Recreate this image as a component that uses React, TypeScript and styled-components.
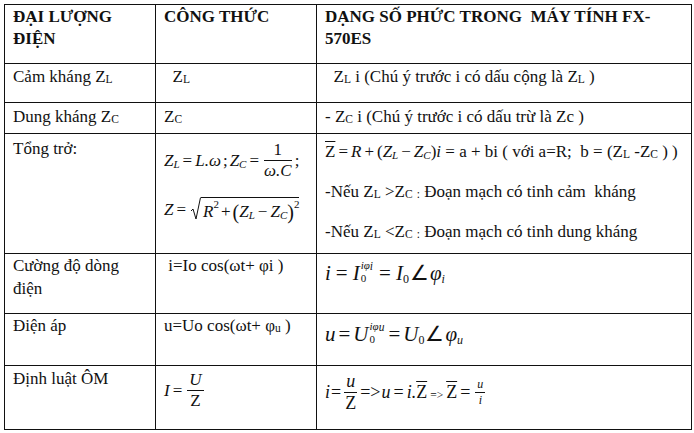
import React from "react"
import styled, { createGlobalStyle } from "styled-components"

const GlobalStyle = createGlobalStyle`
  html, body {
    margin: 0;
    padding: 0;
    background: #ffffff;
  }
  body {
    font-family: "Liberation Serif", "Times New Roman", serif;
    color: #111;
  }
`

const Page = styled.div`
  padding: 4px 0 0 4px;
`

const Table = styled.table`
  border-collapse: collapse;
  table-layout: fixed;
  width: 687px;
  font-size: 17px;
  line-height: 23px;
`

const Row = styled.tr<{ h: number }>`
  height: ${(p) => p.h}px;
`

const Cell = styled.td<{ pl?: number; pt?: number }>`
  border: 1.5px solid #111;
  vertical-align: top;
  padding: ${(p) => p.pt ?? 1}px 2px 0 ${(p) => p.pl ?? 8}px;
  white-space: nowrap;
  overflow: hidden;
`

const HeadCell = styled(Cell)`
  font-weight: bold;
  line-height: 22px;
`

const Sub = styled.span`
  font-size: 11.5px;
  vertical-align: -1px;
`

const Lines = styled.div<{ gap: number; top: number }>`
  display: flex;
  flex-direction: column;
  gap: ${(p) => p.gap}px;
  padding-top: ${(p) => p.top}px;
`

const Math = styled.span<{ size?: number }>`
  display: inline-flex;
  align-items: center;
  font-style: italic;
  font-size: ${(p) => p.size ?? 17}px;
  line-height: 1;
  white-space: nowrap;
`

const Op = styled.span<{ sp?: number }>`
  font-style: normal;
  margin: 0 ${(p) => p.sp ?? 3}px;
`

const Up = styled.span`
  font-style: normal;
`

const Bar = styled.span`
  text-decoration: overline;
  text-decoration-thickness: 1px;
  font-style: normal;
`

const Frac = styled.span<{ size?: number }>`
  display: inline-flex;
  flex-direction: column;
  align-items: center;
  font-size: ${(p) => p.size ?? 17}px;
  line-height: 1.05;
  margin: 0 2px;
`

const Num = styled.span`
  border-bottom: 1px solid #111;
  padding: 0 2px 1px;
  align-self: stretch;
  text-align: center;
`

const Den = styled.span`
  padding-top: 1px;
`

const Scripts = styled.span<{ size: number }>`
  display: inline-flex;
  flex-direction: column;
  font-size: ${(p) => p.size}px;
  line-height: 1;
  margin: 0 1px;
  transform: translateY(-2px);
`

const SmallSub = styled.span<{ size: number; drop?: number }>`
  font-size: ${(p) => p.size}px;
  position: relative;
  top: ${(p) => p.drop ?? 4}px;
`

const Radical = styled.span`
  display: inline-flex;
  align-items: stretch;
  margin-left: 2px;
`

const RadicalBody = styled.span`
  border-top: 1px solid #111;
  padding: 4px 0 0 2px;
  display: inline-flex;
  align-items: center;
`

const Sup = styled.span<{ size?: number }>`
  font-size: ${(p) => p.size ?? 11}px;
  position: relative;
  top: -7px;
  font-style: normal;
`

const Paren = styled.span`
  font-style: normal;
  font-size: 20px;
`

const Angle = styled.span`
  font-style: normal;
  margin: 0 1px;
`

const RadicalSign = () => (
  <svg width="10" height="24" viewBox="0 0 10 24">
    <path d="M0 14 L2 12 L5 22 L9.5 0.5" fill="none" stroke="#111" strokeWidth="1" />
  </svg>
)

const App = (): JSX.Element => {
  return (
    <Page>
      <GlobalStyle />
      <Table>
        <colgroup>
          <col style={{ width: 151 }} />
          <col style={{ width: 161 }} />
          <col style={{ width: 375 }} />
        </colgroup>
        <tbody>
          <Row h={59}>
            <HeadCell pt={1}>
              ĐẠI LƯỢNG
              <br />
              ĐIỆN
            </HeadCell>
            <HeadCell pt={1}>CÔNG THỨC</HeadCell>
            <HeadCell pt={1}>
              DẠNG SỐ PHỨC TRONG&nbsp; MÁY TÍNH FX-
              <br />
              570ES
            </HeadCell>
          </Row>
          <Row h={39}>
            <Cell>
              Cảm kháng Z<Sub>L</Sub>
            </Cell>
            <Cell>
              &nbsp;&nbsp;Z<Sub>L</Sub>
            </Cell>
            <Cell>
              &nbsp;&nbsp;Z<Sub>L</Sub> i (Chú ý trước i có dấu cộng là Z<Sub>L</Sub> )
            </Cell>
          </Row>
          <Row h={31}>
            <Cell pt={2}>
              Dung kháng Z<Sub>C</Sub>
            </Cell>
            <Cell pt={2}>
              Z<Sub>C</Sub>
            </Cell>
            <Cell pt={2}>
              - Z<Sub>C</Sub> i (Chú ý trước i có dấu trừ là Zc )
            </Cell>
          </Row>
          <Row h={120}>
            <Cell pt={3}>Tổng trở:</Cell>
            <Cell>
              <Lines gap={17} top={6}>
                <Math>
                  Z<SmallSub size={11}>L</SmallSub>
                  <Op>=</Op>L.ω <Op sp={2}>;</Op> Z<SmallSub size={11}>C</SmallSub>
                  <Op>=</Op>
                  <Frac>
                    <Num>
                      <Up>1</Up>
                    </Num>
                    <Den>ω.C</Den>
                  </Frac>
                  <Op sp={1}>;</Op>
                </Math>
                <Math>
                  Z<Op>=</Op>
                  <Radical>
                    <RadicalSign />
                    <RadicalBody>
                      R<Sup>2</Sup>
                      <Op sp={2}>+</Op>
                      <Paren>(</Paren>Z<SmallSub size={11}>L</SmallSub>
                      <Op>−</Op>Z<SmallSub size={11}>C</SmallSub>
                      <Paren>)</Paren>
                      <Sup>2</Sup>
                    </RadicalBody>
                  </Radical>
                </Math>
              </Lines>
            </Cell>
            <Cell>
              <Lines gap={14} top={5}>
                <span>
                  <Math>
                    <Bar>Z</Bar>
                    <Op>=</Op>R<Op>+</Op>
                    <Up>(</Up>Z<SmallSub size={11}>L</SmallSub>
                    <Op>−</Op>Z<SmallSub size={11}>C</SmallSub>
                    <Up>)</Up>i
                  </Math>{" "}
                  = a + bi ( với a=R;&nbsp; b = (Z<Sub>L</Sub> -Z<Sub>C</Sub> ) )
                </span>
                <span>
                  -Nếu Z<Sub>L</Sub> &gt;Z<Sub>C</Sub> <Sub>:</Sub> Đoạn mạch có tinh cảm&nbsp; kháng
                </span>
                <span>
                  -Nếu Z<Sub>L</Sub> &lt;Z<Sub>C</Sub> <Sub>:</Sub> Đoạn mạch có tinh dung kháng
                </span>
              </Lines>
            </Cell>
          </Row>
          <Row h={60}>
            <Cell pt={0}>
              Cường độ dòng
              <br />
              điện
            </Cell>
            <Cell pt={0}>&nbsp;i=Io cos(ωt+ φi )</Cell>
            <Cell>
              <Lines gap={0} top={7}>
                <Math size={21}>
                  i<Op sp={5}>=</Op>I
                  <Scripts size={11}>
                    <span>iφ<Sub>i</Sub></span>
                    <Up>0</Up>
                  </Scripts>
                  <Op sp={5}>=</Op>I<SmallSub size={12} drop={5}><Up>0</Up></SmallSub>
                  <Angle>∠</Angle>φ<SmallSub size={12} drop={5}>i</SmallSub>
                </Math>
              </Lines>
            </Cell>
          </Row>
          <Row h={52}>
            <Cell pt={0}>Điện áp</Cell>
            <Cell pt={0}>
              u=Uo cos(ωt+ φ<Sub>u</Sub> )
            </Cell>
            <Cell>
              <Lines gap={0} top={8}>
                <Math size={21}>
                  u<Op sp={3}>=</Op>U
                  <Scripts size={11}>
                    <span>iφ<Sub>u</Sub></span>
                    <Up>0</Up>
                  </Scripts>
                  <Op sp={3}>=</Op>U<SmallSub size={12} drop={5}><Up>0</Up></SmallSub>
                  <Angle>∠</Angle>φ<SmallSub size={12} drop={5}>u</SmallSub>
                </Math>
              </Lines>
            </Cell>
          </Row>
          <Row h={64}>
            <Cell pt={1}>Định luật ÔM</Cell>
            <Cell>
              <Lines gap={0} top={4}>
                <Math>
                  I<Op>=</Op>
                  <Frac>
                    <Num>U</Num>
                    <Den>
                      <Up>Z</Up>
                    </Den>
                  </Frac>
                </Math>
              </Lines>
            </Cell>
            <Cell>
              <Lines gap={0} top={5}>
                <Math size={18}>
                  i<Op sp={1}>=</Op>
                  <Frac size={18}>
                    <Num>u</Num>
                    <Den>
                      <Up>Z</Up>
                    </Den>
                  </Frac>
                  <Op sp={1}>=&gt;</Op>u<Op>=</Op>i.<Bar>Z</Bar>
                  <Op sp={3}>
                    <Sub>=&gt;</Sub>
                  </Op>
                  <Bar>Z</Bar>
                  <Op>=</Op>
                  <Frac size={12}>
                    <Num>u</Num>
                    <Den>i</Den>
                  </Frac>
                </Math>
              </Lines>
            </Cell>
          </Row>
        </tbody>
      </Table>
    </Page>
  )
}

export default App
